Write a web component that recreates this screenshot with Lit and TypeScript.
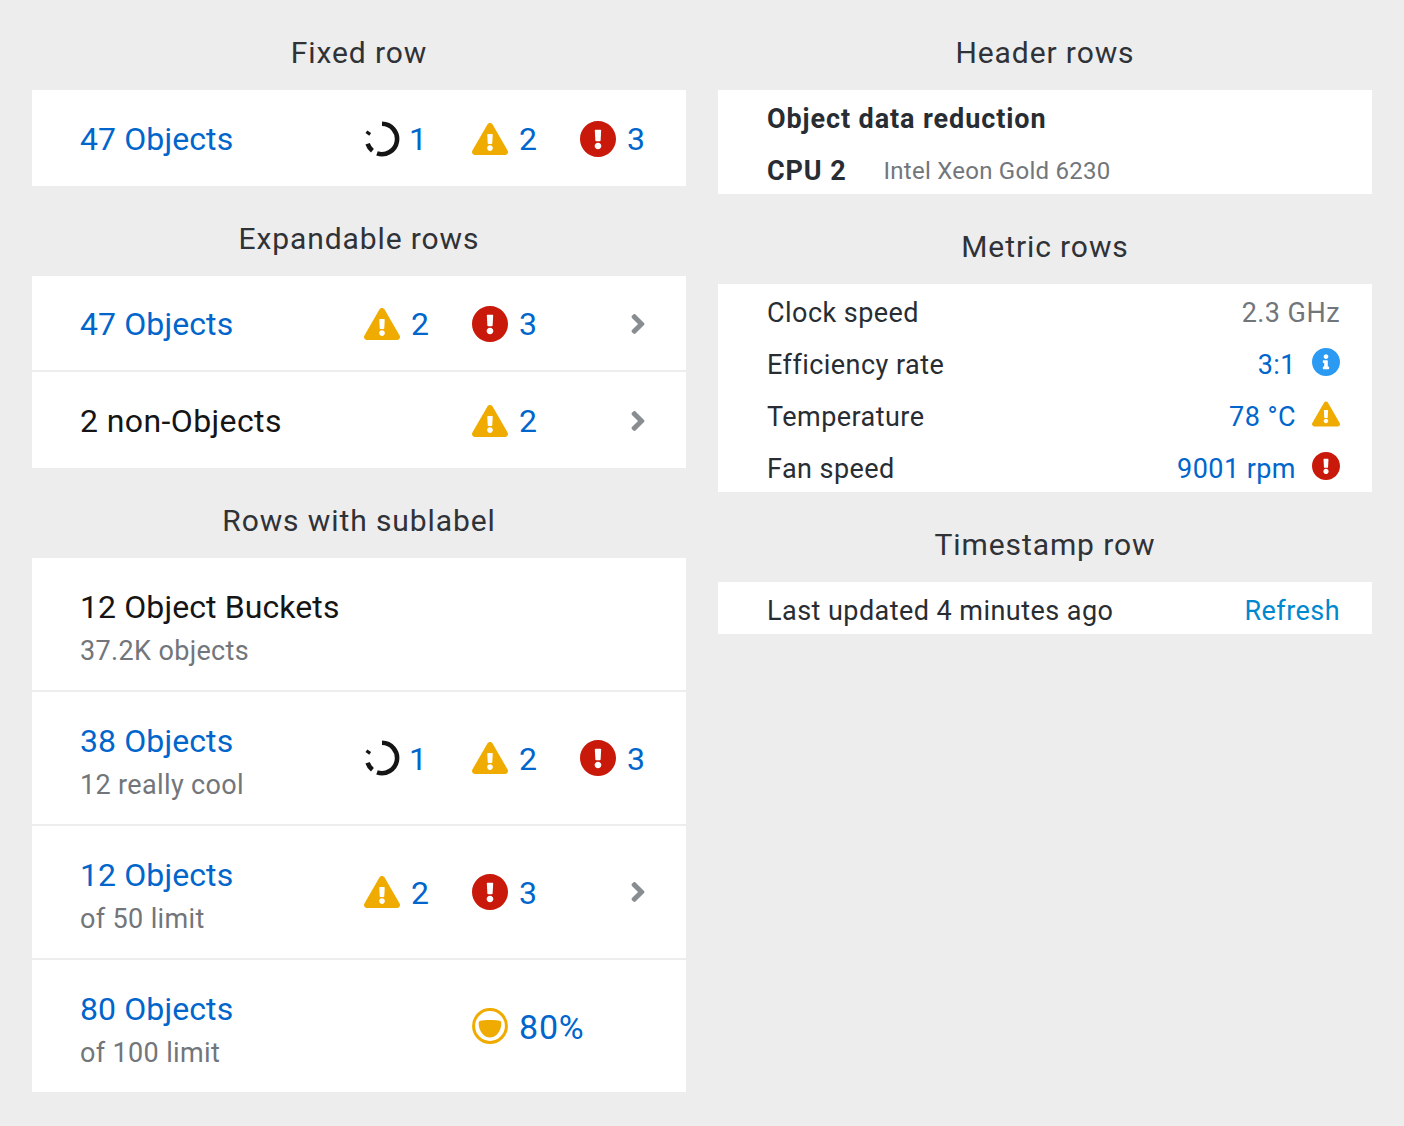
import { LitElement, html, css, svg } from 'lit'
import { customElement } from 'lit/decorators.js'

const TRIANGLE = 'M569.517 440.013C587.975 472.007 564.806 512 527.94 512H48.054c-36.937 0-59.999-40.055-41.577-71.987L246.423 24c18.467-32.009 64.72-31.951 83.154 0l239.94 416.013zM288 354c-25.405 0-46 20.595-46 46s20.595 46 46 46 46-20.595 46-46-20.595-46-46-46zm-43.673-165.346l7.418 136c.347 6.364 5.609 11.346 11.982 11.346h48.546c6.373 0 11.635-4.982 11.982-11.346l7.418-136c.375-6.874-5.098-12.654-11.982-12.654h-63.383c-6.884 0-12.356 5.78-11.981 12.654z'
const CIRCLE = 'M504 256c0 136.997-111.043 248-248 248S8 392.997 8 256C8 119.083 119.043 8 256 8s248 111.083 248 248zm-248 50c-25.405 0-46 20.595-46 46s20.595 46 46 46 46-20.595 46-46-20.595-46-46-46zm-43.673-165.346l7.418 136c.347 6.364 5.609 11.346 11.982 11.346h48.546c6.373 0 11.635-4.982 11.982-11.346l7.418-136c.375-6.874-5.098-12.654-11.982-12.654h-63.383c-6.884 0-12.356 5.78-11.981 12.654z'
const INFO = 'M256 8C119.043 8 8 119.083 8 256c0 136.997 111.043 248 248 248s248-111.003 248-248C504 119.083 392.957 8 256 8zm0 110c23.196 0 42 18.804 42 42s-18.804 42-42 42-42-18.804-42-42 18.804-42 42-42zm56 254c0 6.627-5.373 12-12 12h-88c-6.627 0-12-5.373-12-12v-24c0-6.627 5.373-12 12-12h12v-64h-12c-6.627 0-12-5.373-12-12v-24c0-6.627 5.373-12 12-12h64c6.627 0 12 5.373 12 12v100h12c6.627 0 12 5.373 12 12v24z'
const ANGLE = 'M224.3 273l-136 136c-9.4 9.4-24.6 9.4-33.9 0l-22.6-22.6c-9.4-9.4-9.4-24.6 0-33.9l96.4-96.4-96.4-96.4c-9.4-9.4-9.4-24.6 0-33.9L54.3 103c9.4-9.4 24.6-9.4 33.9 0l136 136c9.5 9.4 9.5 24.6.1 34z'

const warn = (size = 36) => html`<svg class="ic" width=${size} height=${size} viewBox="0 0 576 512" fill="#f0ab00"><path d=${TRIANGLE}></path></svg>`
const danger = (size = 36) => html`<svg class="ic" width=${size} height=${size} viewBox="8 8 496 496" fill="#c9190b"><path d=${CIRCLE}></path></svg>`
const info = (size = 28) => html`<svg class="ic" width=${size} height=${size} viewBox="8 8 496 496" fill="#2b9af3"><path d=${INFO}></path></svg>`
const chevron = html`<svg class="chev" width="16" height="32" viewBox="0 0 256 512" fill="#8a8d90"><path d=${ANGLE}></path></svg>`

const spinner = html`<svg class="ic" width="36" height="36" viewBox="0 0 36 36" fill="none" stroke="#151515" stroke-width="4.6">
  ${svg`<path d="M18 2.8A15.2 15.2 0 1 1 13 32.4"></path><path d="M8.4 29.8A15.2 15.2 0 0 1 3.6 22.8"></path><path d="M3.4 13.4L5.2 10.8"></path>`}
</svg>`

const gauge = html`<svg class="ic" width="36" height="36" viewBox="0 0 36 36">
  ${svg`<circle cx="18" cy="18" r="16.4" fill="none" stroke="#f0ab00" stroke-width="3"></circle><path d="M7.8 13C12 11.8 24 11.8 28.2 13C29.4 13.4 29.3 15 29.3 16C29 23.4 24 29.6 18 29.6C12 29.6 7 23.4 6.7 16C6.7 15 6.6 13.4 7.8 13Z" fill="#f0ab00"></path>`}
</svg>`

@customElement('app-root')
export class AppRoot extends LitElement {
  static styles = css`
    :host {
      display: block;
      min-height: 1126px;
      background: #ededed;
      font-family: 'Roboto', 'Liberation Sans', sans-serif;
      color: #151515;
    }
    .page {
      display: grid;
      grid-template-columns: 654px 654px;
      gap: 32px;
      padding: 32px;
      align-items: start;
    }
    .col { display: flex; flex-direction: column; gap: 32px; }
    h2 {
      margin: 0 0 16px;
      font-size: 30px;
      letter-spacing: 0.9px;
      line-height: 42px;
      font-weight: 400;
      text-align: center;
      color: #2f3237;
    }
    .card { background: #fff; }
    a { color: #06c; text-decoration: none; }
    .row {
      display: grid;
      grid-template-columns: 284px 108px 108px 1fr;
      align-items: center;
      padding-left: 48px;
      padding-top: 2px;
      height: 96px;
      box-sizing: border-box;
      font-size: 32px;
      letter-spacing: 0.1px;
      border-bottom: 2px solid #ededed;
    }
    .row:last-child { border-bottom: none; }
    .row.tall { height: 134px; padding-top: 0; }
    .row.tall:last-child { height: 132px; }
    .label { line-height: 42px; }
    .plain { letter-spacing: 0.4px; }
    .block { padding-top: 8px; }
    .sub { font-size: 27px; letter-spacing: 0.35px; line-height: 38px; color: #72767b; margin-top: 4px; }
    .stat { display: flex; align-items: center; gap: 11px; letter-spacing: 0.8px; }
    .tall .stat a { padding-top: 2px; }
    .one { margin-left: -2px; }
    .pct { font-size: 34px; }
    .ic { display: block; flex: none; }
    .chev-cell { display: flex; justify-content: flex-end; padding-right: 40px; }
    .chev { display: block; }
    .line {
      display: flex;
      align-items: center;
      height: 52px;
      box-sizing: border-box;
      padding: 6px 32px 0 49px;
      font-size: 27px;
      letter-spacing: 0.45px;
      color: #282d33;
    }
    .line .val { margin-left: auto; }
    .line .ic { margin: -6px 0 0 16px; }
    .gray { color: #72767b; }
    .head { font-weight: 700; letter-spacing: 0.9px; }
    .model { margin-left: 37px; font-size: 24px; letter-spacing: 0.25px; color: #72767b; }
    .refresh { color: #0088ce; }
  `

  private status(icon: unknown, value: string, cls = '') {
    return html`<div class="stat">${icon}<a class=${cls}>${value}</a></div>`
  }

  render() {
    const s1 = this.status(spinner, '1', 'one')
    const s2 = this.status(warn(), '2')
    const s3 = this.status(danger(), '3')
    const more = html`<div class="chev-cell">${chevron}</div>`
    return html`
      <div class="page">
        <div class="col">
          <section>
            <h2>Fixed row</h2>
            <div class="card">
              <div class="row"><div class="label"><a>47 Objects</a></div>${s1}${s2}${s3}</div>
            </div>
          </section>
          <section>
            <h2>Expandable rows</h2>
            <div class="card">
              <div class="row"><div class="label"><a>47 Objects</a></div>${s2}${s3}${more}</div>
              <div class="row"><div class="label plain">2 non-Objects</div><div></div>${s2}${more}</div>
            </div>
          </section>
          <section>
            <h2>Rows with sublabel</h2>
            <div class="card">
              <div class="row tall"><div class="block"><div class="label">12 Object Buckets</div><div class="sub">37.2K objects</div></div></div>
              <div class="row tall"><div class="block"><div class="label"><a>38 Objects</a></div><div class="sub">12 really cool</div></div>${s1}${s2}${s3}</div>
              <div class="row tall"><div class="block"><div class="label"><a>12 Objects</a></div><div class="sub">of 50 limit</div></div>${s2}${s3}${more}</div>
              <div class="row tall"><div class="block"><div class="label"><a>80 Objects</a></div><div class="sub">of 100 limit</div></div><div></div>${this.status(gauge, '80%', 'pct')}</div>
            </div>
          </section>
        </div>
        <div class="col">
          <section>
            <h2>Header rows</h2>
            <div class="card">
              <div class="line head">Object data reduction</div>
              <div class="line"><span class="head">CPU 2</span><span class="model">Intel Xeon Gold 6230</span></div>
            </div>
          </section>
          <section>
            <h2>Metric rows</h2>
            <div class="card">
              <div class="line">Clock speed<span class="val gray">2.3 GHz</span></div>
              <div class="line">Efficiency rate<a class="val">3:1</a>${info()}</div>
              <div class="line">Temperature<a class="val">78 °C</a>${warn(28)}</div>
              <div class="line">Fan speed<a class="val">9001 rpm</a>${danger(28)}</div>
            </div>
          </section>
          <section>
            <h2>Timestamp row</h2>
            <div class="card">
              <div class="line">Last updated 4 minutes ago<a class="val refresh">Refresh</a></div>
            </div>
          </section>
        </div>
      </div>
    `
  }
}
